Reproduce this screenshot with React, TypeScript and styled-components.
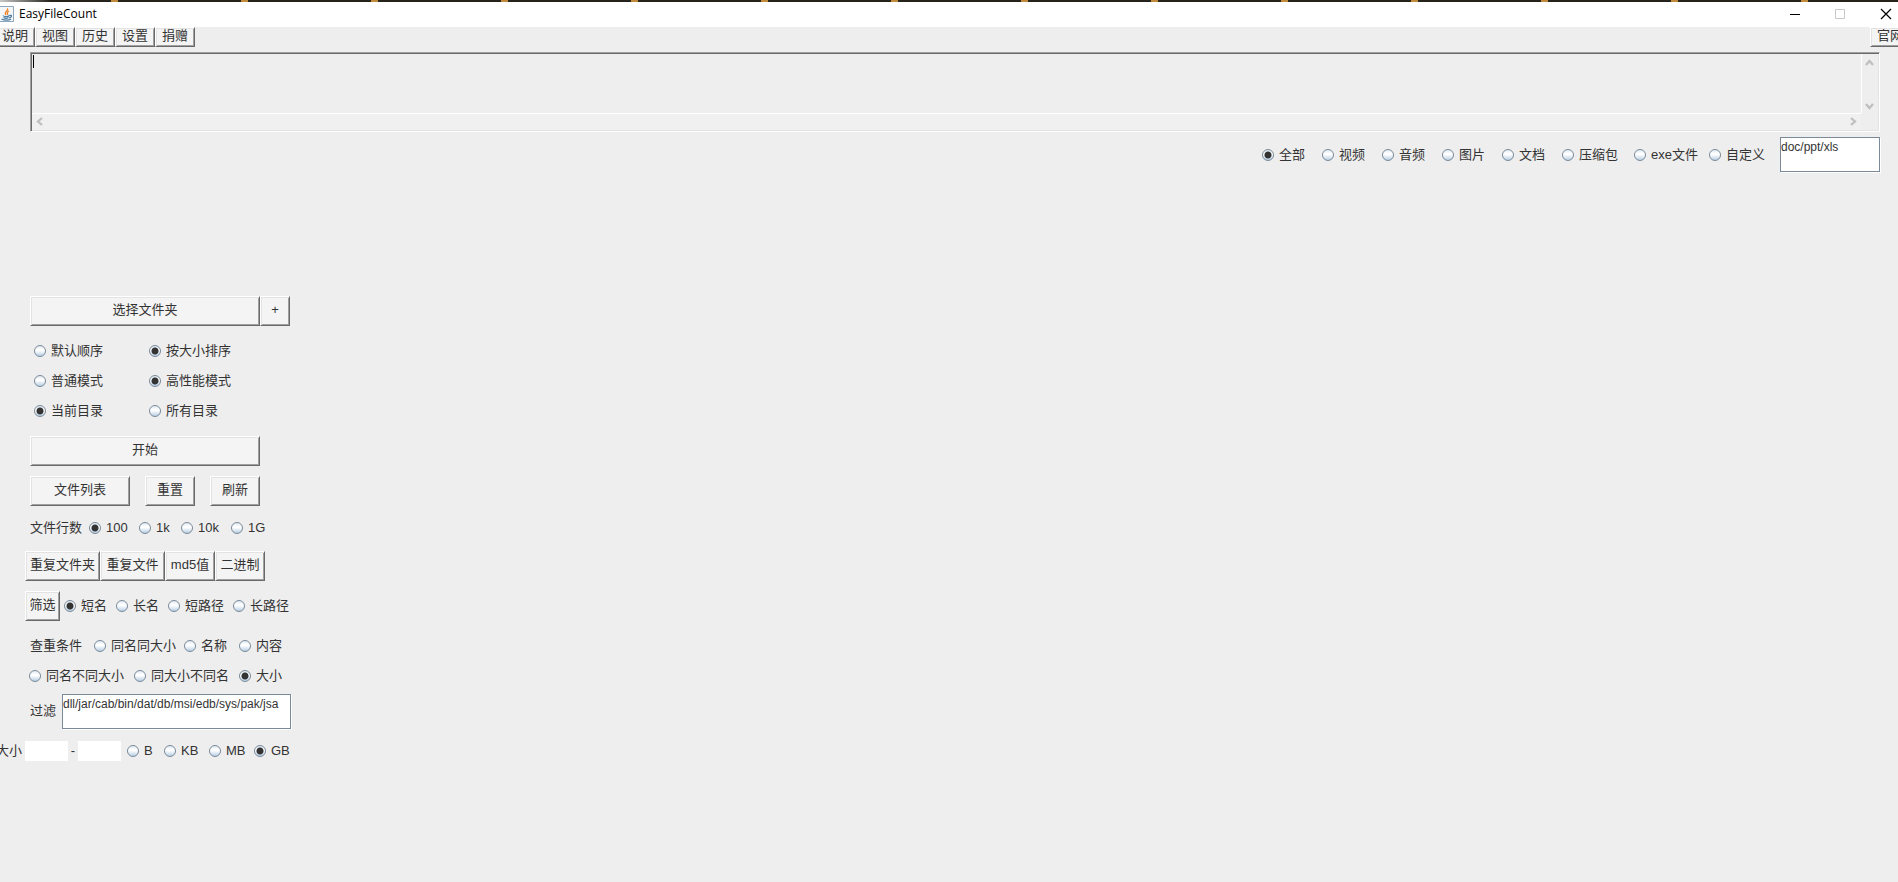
import React from 'react';
import styled, { createGlobalStyle } from 'styled-components';

const Global = createGlobalStyle`
  *, *::before, *::after { box-sizing: border-box; }
  html, body, #root { min-height: 100vh; }
  body {
    margin: 0;
    background: #eeeeee;
    color: #333333;
    font: 13px/20px "Liberation Sans", "Noto Sans CJK SC", sans-serif;
    overflow-x: hidden;
  }
`;

const Window = styled.div`
  min-height: 100vh;
  overflow: hidden;
`;

const Backdrop = styled.div`
  height: 2px;
  background:
    linear-gradient(90deg, #c8c8c8, #26231d 50px, transparent 50px),
    repeating-linear-gradient(90deg, #26231d 0 111px, #c08a3a 111px 118px, #26231d 118px 130px);
`;

const TitleBar = styled.header`
  display: flex;
  align-items: center;
  height: 25px;
  padding: 0 6px 1px 0;
  background: #ffffff;
`;

const Title = styled.h1`
  flex: 1;
  margin: 0 0 0 4px;
  color: #000000;
  font: 12px/20px "Open Sans", sans-serif;
`;

const Controls = styled.div`
  display: flex;
  gap: 33px;
`;

const Control = styled.button`
  display: flex;
  width: 12px;
  height: 12px;
  padding: 0;
  border: 0;
  background: none;
  color: #000000;
  &:disabled { color: #c8c8c8; }
`;

const MenuBar = styled.nav`
  display: flex;
  height: 20px;
  margin: 0 -12px 0 -5px;
`;

const BevelButton = styled.button<{ $w?: number }>`
  flex: none;
  width: ${p => p.$w}px;
  height: 30px;
  padding: 0 0 2px;
  border: 1px solid;
  border-color: #ffffff #696969 #696969 #ffffff;
  background: #f4f4f4;
  box-shadow: inset 1px 1px #e3e3e3, inset -1px -1px #a0a0a0;
  color: #333333;
  font: inherit;
  line-height: 18px;
  white-space: nowrap;
`;

const MenuButton = styled(BevelButton)`
  width: 40px;
  height: 20px;
  line-height: 16px;
  &:last-child { margin-left: auto; }
`;

const LogFrame = styled.section`
  display: grid;
  grid-template: 59px 17px / 1fr 17px;
  height: 80px;
  margin: 5px 18px 0 30px;
  border: 1px solid;
  border-color: #a0a0a0 #ffffff #ffffff #a0a0a0;
  box-shadow: inset 1px 1px #696969, inset -1px -1px #e3e3e3;
  padding: 1px;
`;

const Log = styled.textarea`
  width: 100%;
  height: 100%;
  padding: 0 0 0 1px;
  border: 0;
  outline: 0;
  resize: none;
  background: transparent;
  color: #333333;
  font: inherit;
  overflow: hidden;
`;

const LogBody = styled.div`
  display: flex;
  padding: 1px 0 0 1px;
`;

const Caret = styled.span`
  flex: none;
  width: 1px;
  height: 13px;
  background: #000000;
`;

const VBar = styled.div`
  display: flex;
  flex-direction: column;
  align-items: center;
  justify-content: space-between;
  padding: 5px 1px 3px 0;
  border-left: 1px solid #ffffff;
`;

const HBar = styled.div`
  display: flex;
  align-items: center;
  justify-content: space-between;
  padding: 0 4px 2px;
  border-top: 1px solid #ffffff;
  background: #f0f0f0;
`;

const ScrollButton = styled.button`
  display: flex;
  padding: 0;
  border: 0;
  background: none;
  color: #bfbfbf;
`;

const TypeRow = styled.section`
  display: flex;
  align-items: center;
  justify-content: flex-end;
  margin: 5px 18px 0 0;
`;

const Slot = styled.label<{ $w?: number }>`
  display: flex;
  flex: none;
  align-items: center;
  gap: 5px;
  width: ${p => (p.$w ? `${p.$w}px` : 'auto')};
  white-space: nowrap;
`;

const Dot = styled.input`
  flex: none;
  width: 12px;
  height: 12px;
  margin: 0;
  appearance: none;
  border: 1px solid #7a8a99;
  border-radius: 50%;
  background: linear-gradient(#dde8f3, #ffffff 35%, #ffffff 45%, #b8cfe5);
  &:checked {
    background: radial-gradient(circle, #333333 0 3px, transparent 4px), linear-gradient(#dde8f3, #ffffff 35%, #ffffff 45%, #b8cfe5);
  }
`;

const Pattern = styled.textarea<{ $w: number }>`
  display: block;
  flex: none;
  width: ${p => p.$w}px;
  height: 35px;
  padding: 2px 0;
  border: 1px solid #7a8a99;
  outline: 0;
  resize: none;
  overflow: hidden;
  background: #ffffff;
  box-shadow: 1px 1px #ffffff;
  color: #333333;
  font: 12px/14px "Liberation Sans", sans-serif;
  white-space: nowrap;
`;

const Panel = styled.main`
  display: flex;
  flex-direction: column;
  gap: 10px;
  width: 300px;
  margin-top: 124px;
`;

const Group = styled.div`
  display: flex;
  flex-direction: column;
`;

const Row = styled.div<{ $left?: number; $gap?: number }>`
  display: flex;
  align-items: center;
  gap: ${p => p.$gap ?? 0}px;
  height: 30px;
  padding-left: ${p => p.$left ?? 30}px;
`;

const LineRow = styled(Row)`
  margin: -3px 0 -2px;
`;

const FilterRow = styled(Row)`
  height: 40px;
`;

const SizeRow = styled(Row)`
  margin: 5px 0 0 -4px;
`;

const Caption = styled.span<{ $w: number }>`
  flex: none;
  width: ${p => p.$w}px;
  white-space: nowrap;
`;

const FieldLabel = styled(Caption).attrs({ as: 'label' })<{ htmlFor?: string }>``;

const SizeInput = styled.input`
  width: 43px;
  height: 20px;
  padding: 0 2px;
  border: 0;
  outline: 0;
  background: #ffffff;
  font: inherit;
`;

const Dash = styled.span`
  width: 10px;
  text-align: center;
`;

const Units = styled.div`
  display: flex;
  margin-left: 6px;
`;

type Option = [text: string, width: number, on?: boolean];

const Radios = ({ name, options }: { name: string; options: Option[] }) => (
  <>
    {options.map(([text, width, on]) => (
      <Slot key={text} $w={width}>
        <Dot type="radio" name={name} defaultChecked={on} />
        {text}
      </Slot>
    ))}
  </>
);

const chevrons = {
  up: 'M1 6 4.500 2 8 6',
  down: 'M1 3 4.500 7 8 3',
  left: 'M6 1 2 4.500 6 8',
  right: 'M3 1 7 4.500 3 8',
};

const Scroll = ({ dir }: { dir: keyof typeof chevrons }) => (
  <ScrollButton type="button" aria-label={`Scroll ${dir}`}>
    <svg width="9" height="9" fill="none" stroke="currentColor" strokeWidth="2.300">
      <path d={chevrons[dir]} />
    </svg>
  </ScrollButton>
);

const JavaIcon = () => (
  <svg width="15" height="17" viewBox="0 0 15 17" aria-hidden="true">
    <path d="M0 .5H13.500V15.500H0" fill="#f4f6f8" stroke="#8ba6bd" />
    <path d="M7 2.500C10 4.500 3 5.500 6 9M9 5C6 6.500 8 7.500 7.500 9" fill="none" stroke="#ee8526" strokeWidth="1.300" />
    <path d="M3 9.500C4 11 8 11 9.500 9.500M9.500 9.500C12.500 8.500 12 11.500 9 12M3.500 11.500C5 12.500 7 12.500 8.500 11.500M1.500 13C4 14.500 9 14.500 11 13" fill="none" stroke="#4f7fa5" strokeWidth="1.200" />
  </svg>
);

export default function App() {
  return (
    <Window>
      <Global />
      <Backdrop />
      <TitleBar>
        <JavaIcon />
        <Title>EasyFileCount</Title>
        <Controls>
          <Control type="button" aria-label="Minimize">
            <svg width="12" height="12"><path d="M0 6.500H10" stroke="currentColor" /></svg>
          </Control>
          <Control type="button" aria-label="Maximize" disabled>
            <svg width="12" height="12"><path d="M.5 1.500H9.500V10.500H.5Z" fill="none" stroke="currentColor" /></svg>
          </Control>
          <Control type="button" aria-label="Close">
            <svg width="12" height="12"><path d="M1 1 11 11M11 1 1 11" stroke="currentColor" strokeWidth="1.200" /></svg>
          </Control>
        </Controls>
      </TitleBar>
      <MenuBar>
        {['说明', '视图', '历史', '设置', '捐赠', '官网'].map(t => (
          <MenuButton key={t} type="button">{t}</MenuButton>
        ))}
      </MenuBar>
      <LogFrame>
        <LogBody>
          <Caret />
          <Log aria-label="Log" />
        </LogBody>
        <VBar>
          <Scroll dir="up" />
          <Scroll dir="down" />
        </VBar>
        <HBar>
          <Scroll dir="left" />
          <Scroll dir="right" />
        </HBar>
      </LogFrame>
      <TypeRow>
        <Radios
          name="type"
          options={[['全部', 60, true], ['视频', 60], ['音频', 60], ['图片', 60], ['文档', 60], ['压缩包', 72], ['exe文件', 75], ['自定义', 71]]}
        />
        <Pattern $w={100} aria-label="自定义" defaultValue="doc/ppt/xls" spellCheck={false} />
      </TypeRow>
      <Panel>
        <Row>
          <BevelButton type="button" $w={230}>选择文件夹</BevelButton>
          <BevelButton type="button" $w={30}>+</BevelButton>
        </Row>
        <Group>
          <Row $left={34}><Radios name="order" options={[['默认顺序', 115], ['按大小排序', 115, true]]} /></Row>
          <Row $left={34}><Radios name="mode" options={[['普通模式', 115], ['高性能模式', 115, true]]} /></Row>
          <Row $left={34}><Radios name="scope" options={[['当前目录', 115, true], ['所有目录', 115]]} /></Row>
        </Group>
        <Row>
          <BevelButton type="button" $w={230}>开始</BevelButton>
        </Row>
        <Row $gap={15}>
          <BevelButton type="button" $w={100}>文件列表</BevelButton>
          <BevelButton type="button" $w={50}>重置</BevelButton>
          <BevelButton type="button" $w={50}>刷新</BevelButton>
        </Row>
        <LineRow>
          <Caption $w={59}>文件行数</Caption>
          <Radios name="lines" options={[['100', 50, true], ['1k', 42], ['10k', 50], ['1G', 40]]} />
        </LineRow>
        <Row $left={25}>
          <BevelButton type="button" $w={75}>重复文件夹</BevelButton>
          <BevelButton type="button" $w={65}>重复文件</BevelButton>
          <BevelButton type="button" $w={50}>md5值</BevelButton>
          <BevelButton type="button" $w={50}>二进制</BevelButton>
        </Row>
        <Row $left={25} $gap={4}>
          <BevelButton type="button" $w={35}>筛选</BevelButton>
          <Radios name="display" options={[['短名', 48, true], ['长名', 48], ['短路径', 61], ['长路径', 58]]} />
        </Row>
        <Group>
          <Row>
            <Caption $w={64}>查重条件</Caption>
            <Radios name="match" options={[['同名同大小', 90], ['名称', 55], ['内容', 55]]} />
          </Row>
          <Row $left={29}>
            <Radios name="match" options={[['同名不同大小', 105], ['同大小不同名', 105], ['大小', 55, true]]} />
          </Row>
          <FilterRow>
            <FieldLabel $w={32} htmlFor="filter">过滤</FieldLabel>
            <Pattern id="filter" $w={229} defaultValue="dll/jar/cab/bin/dat/db/msi/edb/sys/pak/jsa" spellCheck={false} />
          </FilterRow>
          <SizeRow $left={0}>
            <FieldLabel $w={29} htmlFor="size-min">大小</FieldLabel>
            <SizeInput id="size-min" />
            <Dash>-</Dash>
            <SizeInput aria-label="最大" />
            <Units>
              <Radios name="unit" options={[['B', 37], ['KB', 45], ['MB', 45], ['GB', 40, true]]} />
            </Units>
          </SizeRow>
        </Group>
      </Panel>
    </Window>
  );
}
